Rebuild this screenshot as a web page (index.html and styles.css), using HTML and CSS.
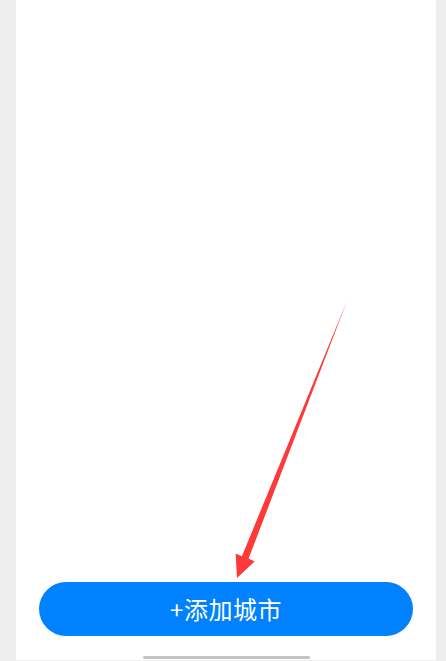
FILE: index.html
```html
<!DOCTYPE html>
<html lang="zh">
<head>
<meta charset="utf-8">
<link rel="stylesheet" href="styles.css">
</head>
<body>
<div class="panel">
  <svg class="arrow" width="446" height="661" viewBox="0 0 446 661">
    <polygon points="346.8,301.5 248.6,558.6 254.6,561.4 237,578 235.6,553.6 241.9,556.2" fill="#fc3a3a"/>
  </svg>
  <div class="content"></div>
  <button class="add-btn">+添加城市</button>
  <div class="home-area"><div class="home-bar"></div></div>
</div>
</body>
</html>
```

FILE: styles.css
```css
html, body {
  margin: 0;
  padding: 0;
}
body {
  background: #eeeeee;
  width: 446px;
  height: 661px;
  overflow: hidden;
  font-family: "Noto Sans CJK SC", "Noto Sans", sans-serif;
}
.panel {
  position: relative;
  margin: 0 10px 0 16px;
  width: 420px;
  height: 660px;
  background: #ffffff;
  display: flex;
  flex-direction: column;
}
.arrow {
  position: absolute;
  left: -16px;
  top: 0;
  pointer-events: none;
}
.content {
  flex: 1;
}
.add-btn {
  margin: 0 23px;
  height: 54px;
  border: none;
  border-radius: 27px;
  background: #0081ff;
  color: #ffffff;
  font-family: "Noto Sans CJK SC", "Noto Sans", sans-serif;
  font-size: 24px;
  letter-spacing: 0.5px;
  line-height: 54px;
  padding: 0;
}
.home-area {
  height: 24px;
  display: flex;
  justify-content: center;
  align-items: flex-end;
  padding-bottom: 1px;
  box-sizing: border-box;
}
.home-bar {
  width: 167px;
  height: 3px;
  background: #c4c4c4;
  border-radius: 2px;
}
```
